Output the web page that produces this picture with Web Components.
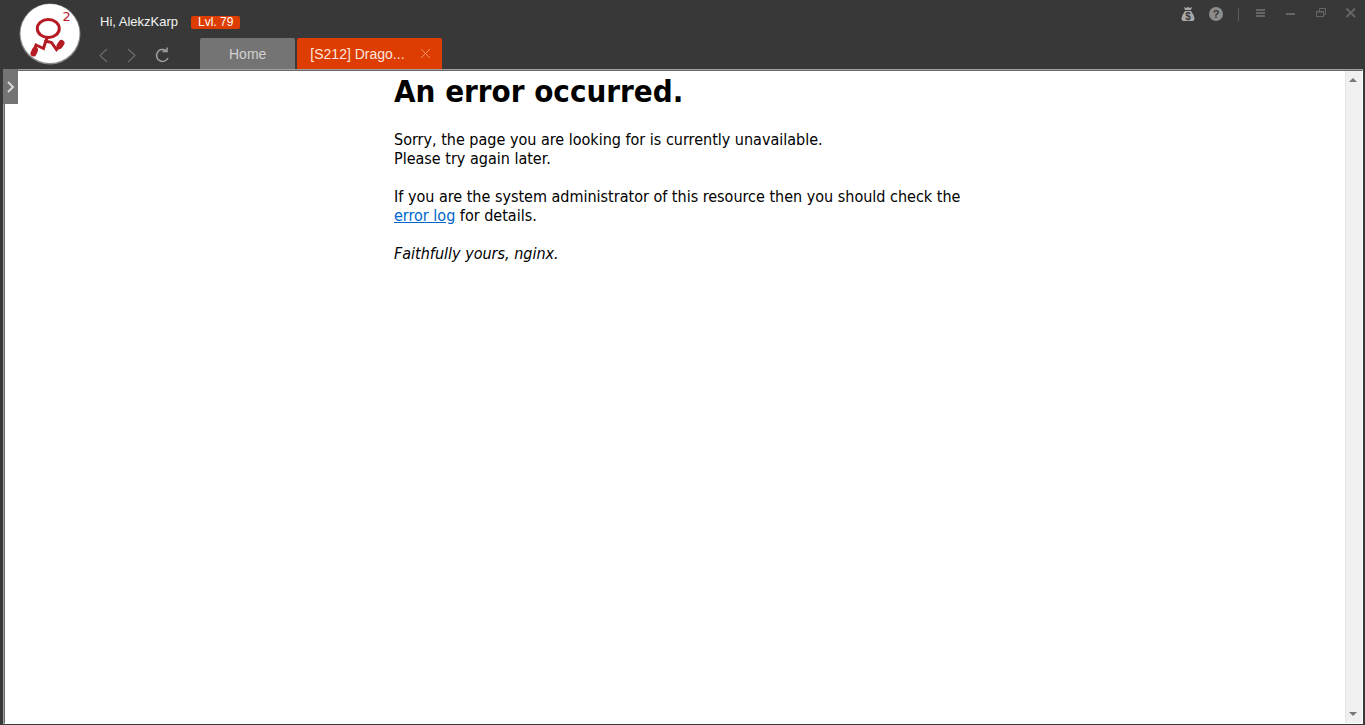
<!DOCTYPE html>
<html lang="en">
<head>
<meta charset="utf-8">
<title>An error occurred</title>
<style>
html,body{margin:0;height:100%}
body{background:#383838;font-family:"Liberation Sans",Arial,sans-serif}
</style>
</head>
<body>
<game-browser></game-browser>
<script>
function define(name, html) {
  const t = document.createElement('template');
  t.innerHTML = html;
  customElements.define(name, class extends HTMLElement {
    constructor() {
      super();
      this.attachShadow({mode: 'open'}).append(t.content.cloneNode(true));
    }
  });
}

define('brand-logo', `
<style>
:host{display:block;width:64px;height:64px}
svg{display:block}
text{font:13px "DejaVu Sans",sans-serif;fill:#b51b22}
</style>
<svg width="64" height="64" viewBox="0 0 64 64" fill="none" role="img" aria-label="Logo">
  <circle cx="32" cy="32" r="30.5" fill="#8b8b8b"/>
  <circle cx="32" cy="31.5" r="29.5" fill="#fff"/>
  <g stroke="#b51b22" stroke-linecap="round">
    <ellipse cx="30.3" cy="26.5" rx="11" ry="9" stroke-width="3"/>
    <path d="M29 36L27.5 40L25.500 46.500L18 43L16 49M27.500 39L33.500 40.500L38.500 47.500L42.500 43" stroke-width="3"/>
    <path d="M17 48L15.500 51.500M43.500 41L41.500 44" stroke-width="6"/>
  </g>
  <text x="44.500" y="19">2</text>
</svg>`);

define('user-bar', `
<style>
:host{display:flex;align-items:center;gap:13px;height:14px;font-size:13px;line-height:14px;color:#f4f4f4}
b{font-weight:400;font-size:12px;line-height:13px;padding:0 7px;background:#dd3d00;border-radius:2px;color:#fff}
</style>
<span><slot></slot></span><b><slot name="level"></slot></b>`);

define('nav-buttons', `
<style>
:host{display:flex;gap:11px;height:28px;align-items:center}
button{all:unset;width:18px;height:18px;display:block}
svg{display:block;fill:none;stroke:#6c6c6c;stroke-width:1.2}
.r{stroke:#a0a0a0;stroke-width:1.5}
</style>
<button aria-label="Back"><svg width="18" height="18"><path d="M12 3L5 9.500L12 16"/></svg></button>
<button aria-label="Forward"><svg width="18" height="18"><path d="M4 3L11 9.500L4 16"/></svg></button>
<button aria-label="Reload"><svg class="r" width="18" height="18"><path d="M15 12A6 6 0 1 1 13 4.500M9.500 5.500H14V1.500"/></svg></button>`);

define('browser-tab', `
<style>
:host{display:flex;align-items:center;box-sizing:border-box;height:31px;border-radius:2px 2px 0 0;background:#747474;color:#d2d2d2;font-size:14px;line-height:16px}
:host([active]){background:#dd3d00;color:#fbe6dd}
button{all:unset;font:inherit;padding:0 29px;white-space:nowrap}
:host([active]) .t{padding:0 0 0 13px}
.x{display:none}
:host([active]) .x{display:block;padding:0 11px 0 15px}
svg{display:block;stroke:#ee9068;stroke-width:1}
</style>
<button class="t"><slot></slot></button><button class="x" aria-label="Close tab"><svg width="11" height="11"><path d="M1 1L10 10M10 1L1 10"/></svg></button>`);

define('window-controls', `
<style>
:host{display:flex;align-items:center;height:28px}
button{all:unset;display:block;width:30px;height:20px}
.w{width:28px}
i{width:1px;height:13px;background:#5c5c5c;margin:0 7px 0 8px}
svg{display:block;margin:auto;fill:none;stroke:#666}
text{font:bold 10px "Liberation Sans",sans-serif;fill:#383838;stroke:none;text-anchor:middle}
.q{font-size:11px}
</style>
<button class="w" aria-label="Recharge"><svg width="20" height="20"><path d="M6 3L8 4L10 3L12 4L14 3L13 6H7Z" fill="#aaa" stroke="none"/><path d="M7 7H13L15.500 11Q18 17 14 17H6Q2 17 4.500 11Z" fill="#aaa" stroke="none"/><text x="10" y="16">$</text></svg></button>
<button class="w" aria-label="Help"><svg width="20" height="20"><circle cx="10" cy="10" r="7" fill="#8c8c8c" stroke="none"/><text class="q" x="10" y="14">?</text></svg></button>
<i></i>
<button aria-label="Menu"><svg width="20" height="20"><path d="M5 6H14M5 9H14M5 12H14" stroke-width="2"/></svg></button>
<button aria-label="Minimize"><svg width="20" height="20"><path d="M5 10H14" stroke-width="2"/></svg></button>
<button aria-label="Restore"><svg width="20" height="20"><path d="M5.500 7.500H12.500V12.500H5.500ZM8.500 7V4.500H14.500V10.500H13M5 8H13"/></svg></button>
<button aria-label="Close"><svg width="20" height="20"><path d="M5.500 4.500L14 13M14 4.500L5.500 13" stroke-width="1.800"/></svg></button>`);

define('title-bar', `
<style>
:host{display:flex;height:69px;background:#383838}
brand-logo{margin:2px 16px 0 18px}
.m{display:flex;flex-direction:column;justify-content:flex-end}
user-bar{margin-left:2px}
.row{display:flex;align-items:flex-end;margin-top:9px}
nav-buttons{margin-left:-3px;width:105px}
.tabs{display:flex;gap:2px}
window-controls{margin:0 -1px 0 auto}
</style>
<brand-logo></brand-logo>
<div class="m">
  <user-bar>Hi, AlekzKarp<span slot="level">Lvl. 79</span></user-bar>
  <div class="row"><nav-buttons></nav-buttons>
    <div class="tabs"><browser-tab>Home</browser-tab><browser-tab active>[S212] Drago...</browser-tab></div>
  </div>
</div>
<window-controls></window-controls>`);

define('scroll-rail', `
<style>
:host{display:flex;flex-direction:column;justify-content:space-between;width:17px;background:#f0f0f0;box-shadow:inset 1px 0 #e6e6e6}
button{all:unset;display:block;height:18px}
svg{display:block;fill:#777}
</style>
<button aria-label="Scroll up"><svg width="17" height="18"><path d="M4 11L8 7L12 11Z"/></svg></button>
<button aria-label="Scroll down"><svg width="17" height="18"><path d="M4 7L8 11L12 7Z"/></svg></button>`);

define('error-page', `
<style>
:host{display:block;width:562px;max-width:100%;margin:0 auto;font-family:"DejaVu Sans Condensed","Noto Sans",sans-serif;font-size:16px;line-height:19px;color:#000}
h1{margin:1px 0 19px;font-size:31px;line-height:39px}
p{margin:0 0 19px;white-space:nowrap}
a{color:#0066cc}
</style>
<h1>An error occurred.</h1>
<p>Sorry, the page you are looking for is currently unavailable.<br>Please try again later.</p>
<p>If you are the system administrator of this resource then you should check the<br><a href="#">error log</a> for details.</p>
<p><em>Faithfully yours, nginx.</em></p>`);

define('side-handle', `
<style>
:host{display:block;width:15px;height:35px;background:#747474}
button{all:unset;display:block}
svg{display:block;fill:none;stroke:#d8d8d8;stroke-width:2}
</style>
<button aria-label="Open side panel"><svg width="15" height="35"><path d="M5 13L10 18L5 23"/></svg></button>`);

define('game-browser', `
<style>
:host{display:flex;flex-direction:column;min-height:100vh}
.frame{flex:1;display:flex;margin:0 2px 1px 3px;border:solid #a0a0a0;border-width:1px 0 0 1px}
main{position:relative;flex:1;display:flex;background:#fff;border:1px solid;border-color:#696969 #fff #fff #696969}
.page{flex:1}
side-handle{position:absolute;left:-2px;top:-2px}
</style>
<title-bar></title-bar>
<div class="frame"><main><div class="page"><error-page></error-page></div><scroll-rail></scroll-rail><side-handle></side-handle></main></div>`);
</script>
</body>
</html>
